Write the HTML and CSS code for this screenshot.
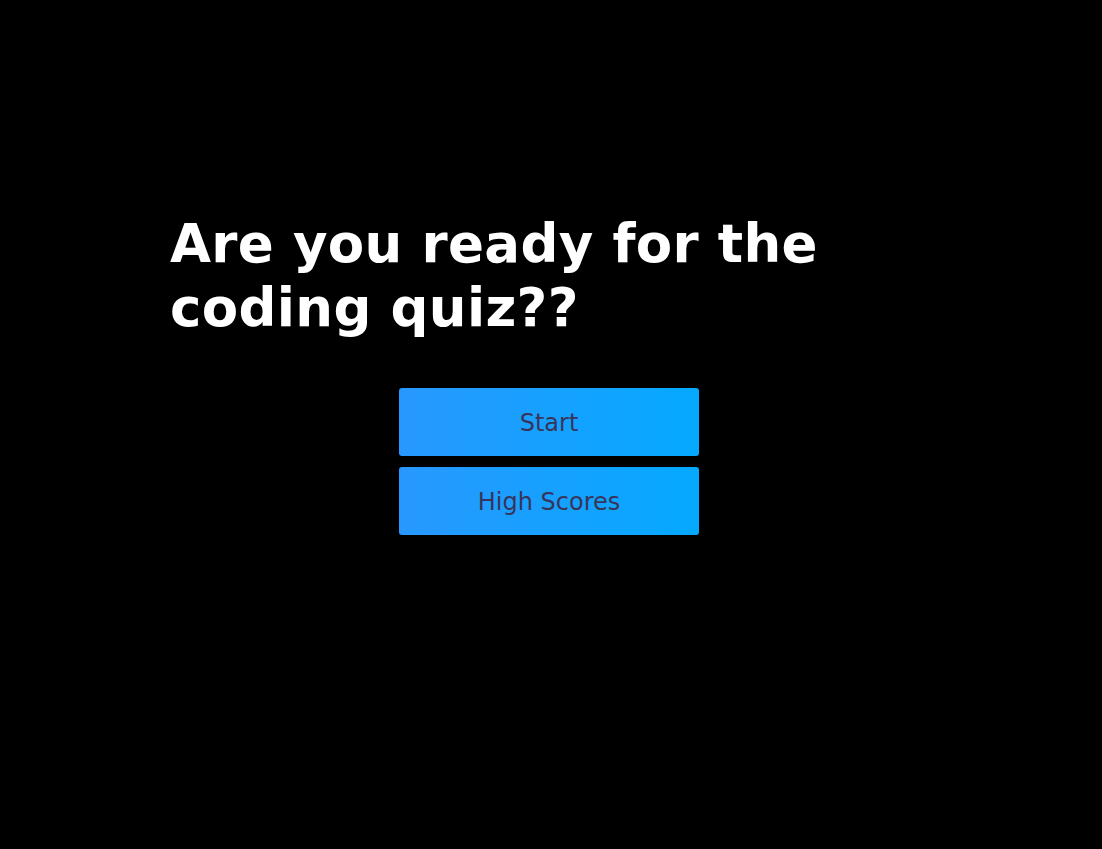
FILE: index.html
```html
<!DOCTYPE html>
<html>
<head>
<meta charset="utf-8">
<link rel="stylesheet" href="styles.css">
</head>
<body>
<main class="quiz">
  <h1 class="title">Are you ready for the coding quiz??</h1>
  <div class="actions">
    <button class="btn">Start</button>
    <button class="btn">High Scores</button>
  </div>
</main>
</body>
</html>
```
FILE: styles.css
```css
html, body {
  margin: 0;
  background: #000;
}
body {
  font-family: "DejaVu Sans", Verdana, sans-serif;
}
.quiz {
  width: 762px;
  margin: 0 auto;
  padding-top: 212px;
  transform: translateX(-2px);
}
.title {
  margin: 0;
  padding-left: 2px;
  color: #fff;
  font-size: 53px;
  font-weight: bold;
  line-height: 64px;
  letter-spacing: 0.35px;
}
.actions {
  display: flex;
  flex-direction: column;
  align-items: center;
  gap: 11px;
  margin-top: 48px;
}
.btn {
  width: 300px;
  height: 68px;
  border: none;
  border-radius: 3px;
  background: linear-gradient(to right, #2898ff, #05a9ff);
  color: #38355a;
  font-family: "DejaVu Sans", Verdana, sans-serif;
  font-size: 24px;
  padding: 2px 0 0;
}
```
